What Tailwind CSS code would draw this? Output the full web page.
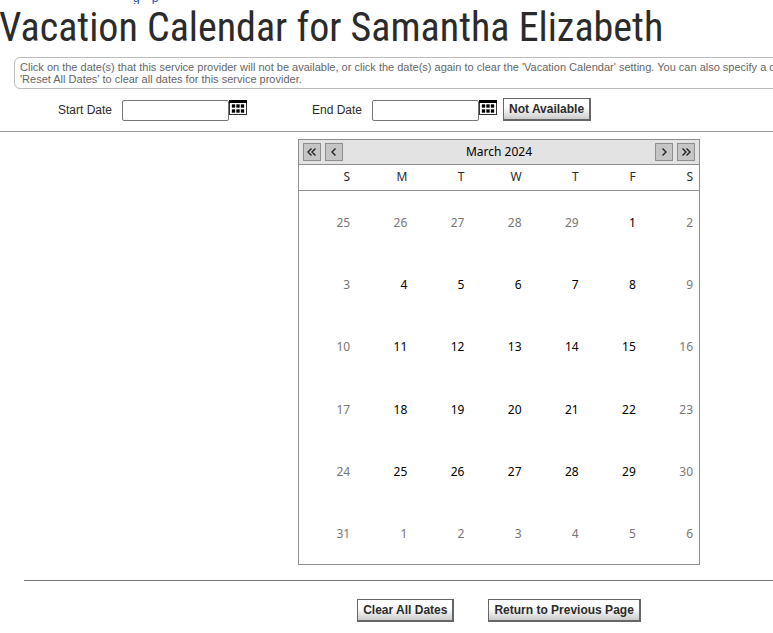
<!DOCTYPE html>
<html lang="en">
<head>
    <meta charset="UTF-8">
    <meta name="viewport" content="width=device-width, initial-scale=1.0">
    <title>Vacation Calendar</title>
    <script src="https://cdn.jsdelivr.net/npm/@tailwindcss/browser@4"></script>
</head>
<body class="bg-white text-[#2b2b2b] font-['Liberation_Sans',Arial,sans-serif] text-xs overflow-x-hidden">
    <!-- tail of the breadcrumb, scrolled out of view -->
    <nav class="h-1 overflow-hidden flex items-end gap-3 pl-[133px] leading-3">
        <a href="#" class="text-[#1a4fb0]">g</a>
        <a href="#" class="text-[#1a4fb0]">p</a>
    </nav>

    <h1 class="-ml-px h-[53px] text-[40px] leading-[48px] whitespace-nowrap font-['Roboto_Condensed',Roboto,sans-serif]">Vacation Calendar for Samantha Elizabeth</h1>

    <div class="ml-3.5 -mr-2 h-8 border border-[#bbb] rounded-md pl-[5px] pt-[3px] text-[11px] leading-3 text-[#666] whitespace-nowrap">
        <p>Click on the date(s) that this service provider will not be available, or click the date(s) again to clear the 'Vacation Calendar' setting. You can also specify a date</p>
        <p>'Reset All Dates' to clear all dates for this service provider.</p>
    </div>

    <form class="flex items-start h-[43px] pt-2 border-b border-[#999]">
        <label for="start-date" class="w-[122px] pr-2.5 pt-[3px] text-right leading-5">Start Date</label>
        <input id="start-date" type="text" class="w-[107px] h-[21px] mt-[3px] border border-[#767676] rounded-[2px]">
        <button type="button" aria-label="Pick start date" class="mt-[3px]">
            <svg class="w-[18px] h-[15px]" viewBox="0 0 18 15">
                <path fill="#333" d="M0 0h18v15H0z"></path>
                <path fill="#000" d="M0 0h18v3H0z"></path>
                <path fill="#fff" d="M1 3h16v11H1z"></path>
                <path fill="#000" stroke="#000" stroke-opacity=".35" stroke-width="1" d="M3 4.500h3v3H3zM7.500 4.500h3v3h-3zM12 4.500h3v3h-3zM3 9.500h3v3H3zM7.500 9.500h3v3h-3zM12 9.500h3v3h-3z"></path>
            </svg>
        </button>
        <label for="end-date" class="w-[125px] pr-2.5 pt-[3px] text-right leading-5">End Date</label>
        <input id="end-date" type="text" class="w-[107px] h-[21px] mt-[3px] border border-[#767676] rounded-[2px]">
        <button type="button" aria-label="Pick end date" class="mt-[3px]">
            <svg class="w-[18px] h-[15px]" viewBox="0 0 18 15">
                <path fill="#333" d="M0 0h18v15H0z"></path>
                <path fill="#000" d="M0 0h18v3H0z"></path>
                <path fill="#fff" d="M1 3h16v11H1z"></path>
                <path fill="#000" stroke="#000" stroke-opacity=".35" stroke-width="1" d="M3 4.500h3v3H3zM7.500 4.500h3v3h-3zM12 4.500h3v3h-3zM3 9.500h3v3H3zM7.500 9.500h3v3h-3zM12 9.500h3v3h-3z"></path>
            </svg>
        </button>
        <button type="button" class="ml-1.5 mt-px h-[23px] px-[5px] border border-r-2 border-b-2 border-[#666] bg-linear-to-b from-white from-40% to-[#ccc] font-bold leading-5">Not Available</button>
    </form>

    <main class="pl-[225px] pt-[7px]">
        <section class="w-[402px] mx-auto border border-[#8e8e8e] font-['Noto_Sans','Open_Sans',sans-serif]">
            <header class="flex items-center h-[25px] px-1 gap-1 border-b border-[#8e8e8e] bg-[#e3e3e3] text-black">
                <button type="button" aria-label="Previous year" class="size-[18px] border border-[#8e8e8e] bg-[#c5c5c5]">
                    <svg class="size-4" viewBox="0 0 16 16" fill="none" stroke="#222" stroke-width="1.4"><path d="M7.500 4.500L4 8l3.500 3.500M11.500 4.500L8 8l3.500 3.500"></path></svg>
                </button>
                <button type="button" aria-label="Previous month" class="size-[18px] border border-[#8e8e8e] bg-[#c5c5c5]">
                    <svg class="size-4" viewBox="0 0 16 16" fill="none" stroke="#222" stroke-width="1.4"><path d="M9.500 4.500L6 8l3.500 3.500"></path></svg>
                </button>
                <h2 class="grow text-center">March 2024</h2>
                <button type="button" aria-label="Next month" class="size-[18px] border border-[#8e8e8e] bg-[#c5c5c5]">
                    <svg class="size-4" viewBox="0 0 16 16" fill="none" stroke="#222" stroke-width="1.4"><path d="M6.500 4.500L10 8l-3.500 3.500"></path></svg>
                </button>
                <button type="button" aria-label="Next year" class="size-[18px] border border-[#8e8e8e] bg-[#c5c5c5]">
                    <svg class="size-4" viewBox="0 0 16 16" fill="none" stroke="#222" stroke-width="1.4"><path d="M4.500 4.500L8 8l-3.500 3.500M8.500 4.500L12 8l-3.500 3.500"></path></svg>
                </button>
            </header>
            <table class="w-full table-fixed text-right">
                <thead>
                    <tr class="h-[25px] border-b border-[#8e8e8e]">
                        <th class="font-normal pr-1.5">S</th>
                        <th class="font-normal pr-1.5">M</th>
                        <th class="font-normal pr-1.5">T</th>
                        <th class="font-normal pr-1.5">W</th>
                        <th class="font-normal pr-1.5">T</th>
                        <th class="font-normal pr-1.5">F</th>
                        <th class="font-normal pr-1.5">S</th>
                    </tr>
                </thead>
                <tbody id="days"></tbody>
            </table>
        </section>
    </main>

    <footer class="ml-6 mt-[15px] pt-[18px] border-t border-[#777] pl-[201px] flex justify-center gap-[34px]">
        <button type="button" class="h-[23px] px-[5px] border border-r-2 border-b-2 border-[#666] bg-linear-to-b from-white from-40% to-[#ccc] font-bold leading-5">Clear All Dates</button>
        <button type="button" class="h-[23px] px-[5px] border border-r-2 border-b-2 border-[#666] bg-linear-to-b from-white from-40% to-[#ccc] font-bold leading-5">Return to Previous Page</button>
    </footer>

    <script>
        const firstDay = new Date(2024, 1, 25);

        function renderDays() {
            let rows = '';
            for (let week = 0; week < 6; week++) {
                // every third row takes one spare pixel of the calendar's height
                rows += `<tr class="${week % 3 === 2 ? 'h-[63px]' : 'h-[62px]'}">`;
                for (let day = 0; day < 7; day++) {
                    const date = new Date(2024, 1, firstDay.getDate() + week * 7 + day);
                    const workday = date.getMonth() === 2 && day > 0 && day < 6;
                    rows += `<td class="pr-1.5 pt-[3px] ${workday ? 'text-black' : 'text-[#777]'}">${date.getDate()}</td>`;
                }
                rows += '</tr>';
            }
            document.getElementById('days').innerHTML = rows;
        }

        renderDays();
    </script>
</body>
</html>
